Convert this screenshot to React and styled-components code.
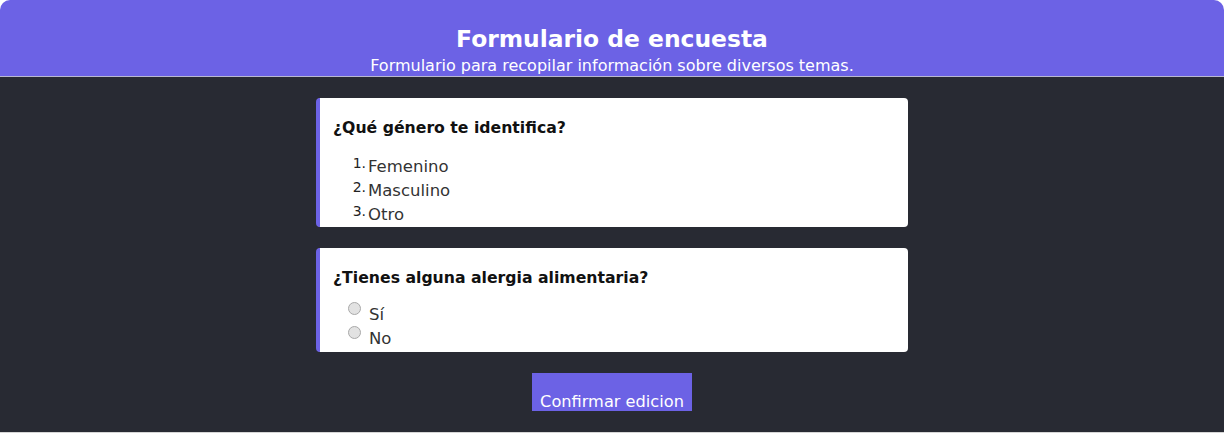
import React from "react";
import styled, { createGlobalStyle } from "styled-components";

const Global = createGlobalStyle`
  html, body { margin: 0; padding: 0; background: #ffffff; }
  body { font-family: "DejaVu Sans", "Open Sans", sans-serif; }
`;

const Page = styled.div`
  display: flex;
  flex-direction: column;
  width: 1224px;
`;

const Header = styled.header`
  background: #6c62e5;
  border-radius: 10px 10px 0 0;
  border-bottom: 1px solid #b9b8d0;
  height: 76px;
  display: flex;
  flex-direction: column;
  align-items: center;
  color: #ffffff;
`;

const Title = styled.h1`
  margin: 24px 0 0;
  font-size: 23.4px;
  line-height: 30px;
  font-weight: 700;
`;

const Subtitle = styled.p`
  margin: 2px 0 0;
  font-size: 16px;
  line-height: 20px;
`;

const Main = styled.main`
  background: #282a33;
  height: 334px;
  padding-top: 21px;
  display: flex;
  flex-direction: column;
  align-items: center;
  gap: 21px;
  border-bottom: 1px solid #d6d6d6;
`;

const Card = styled.section`
  width: 588px;
  height: ${(p) => p.$h}px;
  background: #ffffff;
  border-left: 4px solid #6c62e5;
  border-radius: 4px;
  display: flex;
  flex-direction: column;
  flex-shrink: 0;
`;

const Question = styled.h2`
  margin: 20px 0 0 13px;
  font-size: 15.7px;
  line-height: 20px;
  font-weight: 700;
  color: #111;
`;

const List = styled.ol`
  list-style: none;
  margin: 17px 0 0;
  padding: 0;
  display: flex;
  flex-direction: column;
`;

const Item = styled.li`
  display: flex;
  align-items: flex-start;
  height: 24px;
`;

const Num = styled.span`
  width: 46px;
  text-align: right;
  font-size: 14px;
  line-height: 16px;
  color: #222;
`;

const Label = styled.span`
  margin-left: 2px;
  margin-top: 2px;
  font-size: 16.5px;
  line-height: 20px;
  color: #333;
`;

const Options = styled.div`
  margin: 13px 0 0 28px;
  display: flex;
  flex-direction: column;
`;

const Option = styled.label`
  display: flex;
  align-items: flex-start;
  height: 24px;
`;

const Radio = styled.span`
  width: 11px;
  height: 11px;
  border-radius: 50%;
  background: #e2e2e2;
  border: 1px solid #a9a9a9;
  margin-top: 1px;
  flex-shrink: 0;
`;

const RadioText = styled.span`
  margin-left: 8px;
  margin-top: 4px;
  font-size: 16.5px;
  line-height: 20px;
  color: #333;
`;

const Button = styled.button`
  height: 38px;
  padding: 0 8px 0;
  border: none;
  border-radius: 0;
  background: #6c62e5;
  color: #ffffff;
  font-family: inherit;
  font-size: 16.2px;
  line-height: 18px;
  display: flex;
  align-items: flex-end;
  flex-shrink: 0;
  cursor: pointer;
`;

export default function App() {
  return (
    <>
      <Global />
      <Page>
        <Header>
          <Title>Formulario de encuesta</Title>
          <Subtitle>Formulario para recopilar información sobre diversos temas.</Subtitle>
        </Header>
        <Main>
          <Card $h={129}>
            <Question>¿Qué género te identifica?</Question>
            <List>
              {["Femenino", "Masculino", "Otro"].map((t, i) => (
                <Item key={t}>
                  <Num>{i + 1}.</Num>
                  <Label>{t}</Label>
                </Item>
              ))}
            </List>
          </Card>
          <Card $h={104}>
            <Question>¿Tienes alguna alergia alimentaria?</Question>
            <Options>
              {["Sí", "No"].map((t) => (
                <Option key={t}>
                  <Radio />
                  <RadioText>{t}</RadioText>
                </Option>
              ))}
            </Options>
          </Card>
          <Button>Confirmar edicion</Button>
        </Main>
      </Page>
    </>
  );
}
